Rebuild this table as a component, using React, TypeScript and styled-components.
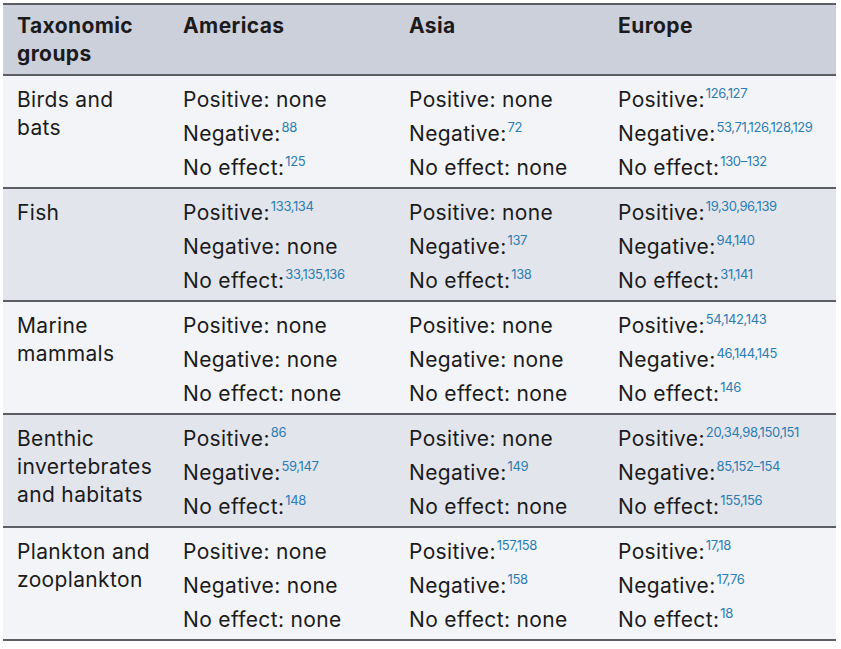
import React from "react";
import styled, { createGlobalStyle } from "styled-components";

const GlobalStyle = createGlobalStyle`
  html, body {
    margin: 0;
    padding: 0;
    background: #fff;
  }
  body {
    font-family: Inter, "Noto Sans", "Liberation Sans", sans-serif;
    color: #1b1b1b;
  }
`;

type Ref = { label: string; refs?: string };
type Row = { group: string[]; cells: Ref[][] };

const rows: Row[] = [
  {
    group: ["Birds and", "bats"],
    cells: [
      [{ label: "Positive: none" }, { label: "Negative:", refs: "88" }, { label: "No effect:", refs: "125" }],
      [{ label: "Positive: none" }, { label: "Negative:", refs: "72" }, { label: "No effect: none" }],
      [
        { label: "Positive:", refs: "126,127" },
        { label: "Negative:", refs: "53,71,126,128,129" },
        { label: "No effect:", refs: "130–132" },
      ],
    ],
  },
  {
    group: ["Fish"],
    cells: [
      [{ label: "Positive:", refs: "133,134" }, { label: "Negative: none" }, { label: "No effect:", refs: "33,135,136" }],
      [{ label: "Positive: none" }, { label: "Negative:", refs: "137" }, { label: "No effect:", refs: "138" }],
      [
        { label: "Positive:", refs: "19,30,96,139" },
        { label: "Negative:", refs: "94,140" },
        { label: "No effect:", refs: "31,141" },
      ],
    ],
  },
  {
    group: ["Marine", "mammals"],
    cells: [
      [{ label: "Positive: none" }, { label: "Negative: none" }, { label: "No effect: none" }],
      [{ label: "Positive: none" }, { label: "Negative: none" }, { label: "No effect: none" }],
      [
        { label: "Positive:", refs: "54,142,143" },
        { label: "Negative:", refs: "46,144,145" },
        { label: "No effect:", refs: "146" },
      ],
    ],
  },
  {
    group: ["Benthic", "invertebrates", "and habitats"],
    cells: [
      [{ label: "Positive:", refs: "86" }, { label: "Negative:", refs: "59,147" }, { label: "No effect:", refs: "148" }],
      [{ label: "Positive: none" }, { label: "Negative:", refs: "149" }, { label: "No effect: none" }],
      [
        { label: "Positive:", refs: "20,34,98,150,151" },
        { label: "Negative:", refs: "85,152–154" },
        { label: "No effect:", refs: "155,156" },
      ],
    ],
  },
  {
    group: ["Plankton and", "zooplankton"],
    cells: [
      [{ label: "Positive: none" }, { label: "Negative: none" }, { label: "No effect: none" }],
      [{ label: "Positive:", refs: "157,158" }, { label: "Negative:", refs: "158" }, { label: "No effect: none" }],
      [{ label: "Positive:", refs: "17,18" }, { label: "Negative:", refs: "17,76" }, { label: "No effect:", refs: "18" }],
    ],
  },
];

const Page = styled.div`
  padding: 3px 5px 0 3px;
`;

const Table = styled.table`
  width: 833px;
  border-collapse: collapse;
  table-layout: fixed;
  font-size: 21px;
  letter-spacing: 0.35px;
  border-top: 2px solid #5c5e63;
  border-bottom: 2px solid #5c5e63;
`;

const Head = styled.th`
  background: #ccd0db;
  text-align: left;
  vertical-align: top;
  font-weight: 700;
  line-height: 28px;
  padding: 7px 8px 6px 14px;
  border-bottom: 2px solid #5c5e63;
  letter-spacing: 0.4px;
`;

const BodyRow = styled.tr<{ $shade: boolean }>`
  background: ${(p) => (p.$shade ? "#e3e5ec" : "#f3f4f8")};
  border-top: 2px solid #5c5e63;
  height: 113px;
`;

const GroupCell = styled.td`
  vertical-align: top;
  line-height: 28px;
  padding: 10px 4px 1px 14px;
`;

const EffectCell = styled.td`
  vertical-align: top;
  padding: 7px 4px 1px 14px;
`;

const Line = styled.div`
  line-height: 34px;
  white-space: nowrap;
`;

const Sup = styled.sup`
  font-size: 13px;
  line-height: 0;
  color: #2b7db4;
  letter-spacing: -0.4px;
  vertical-align: 9px;
  margin-left: 1px;
`;

export default function App() {
  return (
    <Page>
      <GlobalStyle />
      <Table>
        <colgroup>
          <col style={{ width: 166 }} />
          <col style={{ width: 226 }} />
          <col style={{ width: 209 }} />
          <col style={{ width: 232 }} />
        </colgroup>
        <thead>
          <tr>
            <Head>
              Taxonomic
              <br />
              groups
            </Head>
            <Head>Americas</Head>
            <Head>Asia</Head>
            <Head>Europe</Head>
          </tr>
        </thead>
        <tbody>
          {rows.map((row, i) => (
            <BodyRow key={i} $shade={i % 2 === 1}>
              <GroupCell>
                {row.group.map((g, k) => (
                  <div key={k}>{g}</div>
                ))}
              </GroupCell>
              {row.cells.map((cell, j) => (
                <EffectCell key={j}>
                  {cell.map((r, k) => (
                    <Line key={k}>
                      {r.label}
                      {r.refs && <Sup>{r.refs}</Sup>}
                    </Line>
                  ))}
                </EffectCell>
              ))}
            </BodyRow>
          ))}
        </tbody>
      </Table>
    </Page>
  );
}
